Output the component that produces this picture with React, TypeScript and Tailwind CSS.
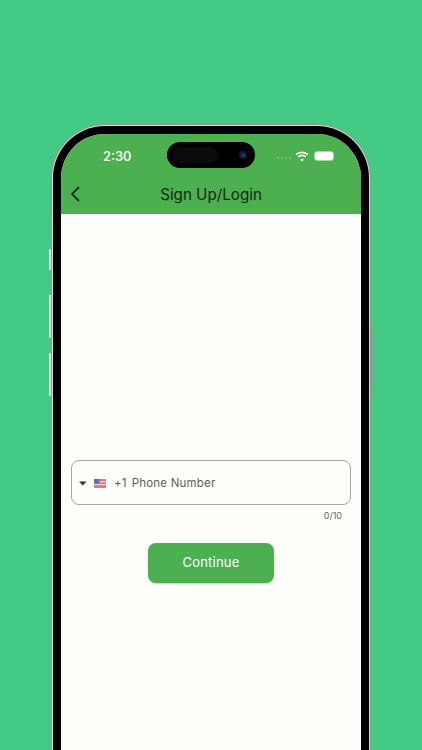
export default function App() {
  return (
    <div className="relative h-[750px] w-[422px] overflow-hidden bg-[#43cb85] pl-[51px] pt-[124px] font-['Inter',sans-serif]">
      <div className="relative h-[700px] w-[320px]">
        <div className="absolute left-[-2px] top-[125px] h-[21px] w-[1.5px] bg-[#cfe3d8]" />
        <div className="absolute left-[-2px] top-[171px] h-[43px] w-[1.5px] bg-[#cfe3d8]" />
        <div className="absolute left-[-2px] top-[229px] h-[43px] w-[1.5px] bg-[#cfe3d8]" />
        <div className="absolute right-[-1.5px] top-[202px] h-[70px] w-[1.5px] bg-[#7fa592]" />
        <div className="h-full rounded-t-[54px] border border-b-0 border-[#8a9a92] bg-[#d9dedb] p-[1px] pb-0">
          <div className="flex h-full flex-col overflow-hidden rounded-t-[52px] border-[8px] border-b-0 border-black bg-[#fdfef9]">
            <header className="flex h-[80px] shrink-0 flex-col bg-[#4caf50]">
              <div className="flex h-[40px] items-center justify-between pl-[42px] pr-[27px] pt-[4px]">
                <span className="text-[13px] font-medium leading-none text-white">2:30</span>
                <div className="flex h-[26px] w-[88px] translate-x-[7px] translate-y-[-1px] items-center justify-between rounded-full bg-black pl-[5px] pr-[8px]">
                  <div className="h-[16px] w-[46px] rounded-full bg-[#0b0b0b]" />
                  <div className="flex h-[8px] w-[8px] items-center justify-center rounded-full bg-[#14183a]">
                    <div className="h-[3px] w-[3px] rounded-full bg-[#2c3a80]" />
                  </div>
                </div>
                <div className="flex items-center gap-[4px]">
                  <div className="mt-[3px] flex gap-[2px]">
                    <div className="h-[2px] w-[2px] rounded-full bg-[#7cc27f]" />
                    <div className="h-[2px] w-[2px] rounded-full bg-[#7cc27f]" />
                    <div className="h-[2px] w-[2px] rounded-full bg-[#7cc27f]" />
                    <div className="h-[2px] w-[2px] rounded-full bg-[#7cc27f]" />
                  </div>
                  <svg width="14" height="11" viewBox="0 0 14 11" fill="none" stroke="white" strokeWidth="1.7">
                    <path d="M1 3.6C4.4 .5 9.6 .5 13 3.6" />
                    <path d="M3.2 5.9C5.4 4 8.6 4 10.8 5.9" />
                    <path d="M7 10.6 5.1 8.4C6.2 7.5 7.8 7.5 8.9 8.4Z" fill="white" stroke="none" />
                  </svg>
                  <div className="ml-[1px] flex h-[10px] w-[20px] items-center rounded-[3.5px] bg-[#a5d6a7] p-[1px]">
                    <div className="h-full w-full rounded-[2.5px] bg-white" />
                  </div>
                </div>
              </div>
              <div className="relative flex h-[40px] items-center justify-center">
                <svg className="absolute left-[8px] top-[11px]" width="12" height="18" viewBox="0 0 12 18" fill="none" stroke="#1b2e1c" strokeWidth="1.8">
                  <path d="M10 2 3 9l7 7" />
                </svg>
                <span className="mt-[1px] text-[15.2px] leading-none text-[#17291a]">Sign Up/Login</span>
              </div>
            </header>
            <main className="flex flex-1 flex-col px-[10px] pt-[246px]">
              <div className="flex h-[45px] items-center rounded-[8px] border border-[#a3a6a3] pl-[7px] pt-[2px] text-[11.5px] tracking-[0.2px] text-[#5a5e5a]">
                <svg className="mt-[-1px]" width="8" height="5" viewBox="0 0 8 5" fill="#333">
                  <path d="M0 .5h7.5L3.75 4.5Z" />
                </svg>
                <svg className="ml-[7px] mt-[-1px]" width="12" height="9" viewBox="0 0 12 9">
                  <rect width="12" height="9" rx="1" fill="#e0777f" />
                  <rect y="2.2" width="12" height="1.2" fill="#f0d0d4" />
                  <rect y="5" width="12" height="1.2" fill="#f0d0d4" />
                  <rect width="5.5" height="4.5" rx="0.5" fill="#5a6fb0" />
                </svg>
                <span className="ml-[8px]">+1</span>
                <span className="ml-[5px]">Phone Number</span>
              </div>
              <div className="mt-[5px] pr-[9px] text-right text-[9px] leading-[11px] text-[#666a66]">0/10</div>
              <button className="mx-auto mt-[22px] flex h-[40px] w-[126px] items-center justify-center rounded-[8px] bg-[#4caf50] text-[13px] tracking-[0.2px] text-white shadow-[0_1px_2px_rgba(0,0,0,0.2)]">
                Continue
              </button>
            </main>
          </div>
        </div>
      </div>
    </div>
  );
}
